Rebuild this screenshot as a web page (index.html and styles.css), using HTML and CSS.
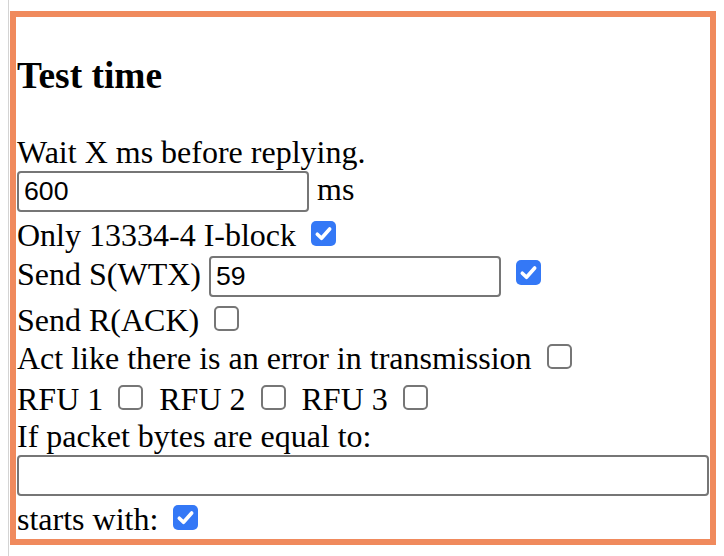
FILE: index.html
```html
<!DOCTYPE html>
<html>
<head>
<meta charset="utf-8">
<link rel="stylesheet" href="styles.css">
</head>
<body>
<div class="page">
  <div class="panel">
    <h3 class="title">Test time</h3>
    <div class="row">Wait X ms before replying.</div>
    <div class="row"><input class="field" type="text" value="600"> ms</div>
    <div class="row">Only 13334-4 I-block <span class="cb on"><svg viewBox="0 0 25 25" width="25" height="25"><path d="M6.3 13.2 L10.5 17.3 L18.7 8" /></svg></span></div>
    <div class="row">Send S(WTX) <input class="field" type="text" value="59"> <span class="cb on"><svg viewBox="0 0 25 25" width="25" height="25"><path d="M6.3 13.2 L10.5 17.3 L18.7 8" /></svg></span></div>
    <div class="row">Send R(ACK) <span class="cb"></span></div>
    <div class="row">Act like there is an error in transmission <span class="cb"></span></div>
    <div class="row row-gap">RFU 1 <span class="cb"></span> RFU 2 <span class="cb"></span> RFU 3 <span class="cb"></span></div>
    <div class="row">If packet bytes are equal to:</div>
    <div class="row"><input class="field wide" type="text" value=""></div>
    <div class="row">starts with: <span class="cb on"><svg viewBox="0 0 25 25" width="25" height="25"><path d="M6.3 13.2 L10.5 17.3 L18.7 8" /></svg></span></div>
  </div>
</div>
</body>
</html>
```

FILE: styles.css
```css
html, body {
  margin: 0;
  padding: 0;
  background: #ffffff;
}
body {
  font-family: "Liberation Serif", "Times New Roman", serif;
  font-size: 32px;
  color: #000;
}
.page {
  margin-left: 8px;
  border-left: 1px solid #d4d4d4;
  min-height: 556px;
  padding-top: 11px;
  padding-left: 1px;
  box-sizing: border-box;
}
.panel {
  width: 706px;
  height: 534px;
  box-sizing: border-box;
  border: 6px solid #f08a5d;
  padding: 0 1px;
}
.title {
  font-size: 37.4px;
  font-weight: bold;
  margin: 37px 0 37px 0;
  line-height: 43px;
}
.row {
  line-height: 36.8px;
  white-space: nowrap;
}
.row-gap {
  padding-top: 2px;
}
.field {
  font-family: "Liberation Sans", Arial, sans-serif;
  font-size: 26.67px;
  width: 292px;
  height: 41px;
  box-sizing: border-box;
  border: 2px solid #767676;
  border-radius: 4px;
  padding: 0 5px;
  margin: 0 0 3px 0;
  color: #000;
  background: #fff;
  vertical-align: baseline;
  outline: none;
}
.field.wide {
  width: 100%;
}
.cb {
  display: inline-block;
  width: 25px;
  height: 25px;
  box-sizing: border-box;
  border: 2px solid #767676;
  border-radius: 5px;
  margin: 6px 8px 0 7px;
  vertical-align: baseline;
  background: #fff;
}
.cb.on {
  border: none;
  background: #3478f6;
}
.cb svg {
  display: block;
}
.cb svg path {
  fill: none;
  stroke: #ffffff;
  stroke-width: 3.6;
  stroke-linecap: round;
  stroke-linejoin: round;
}
```
